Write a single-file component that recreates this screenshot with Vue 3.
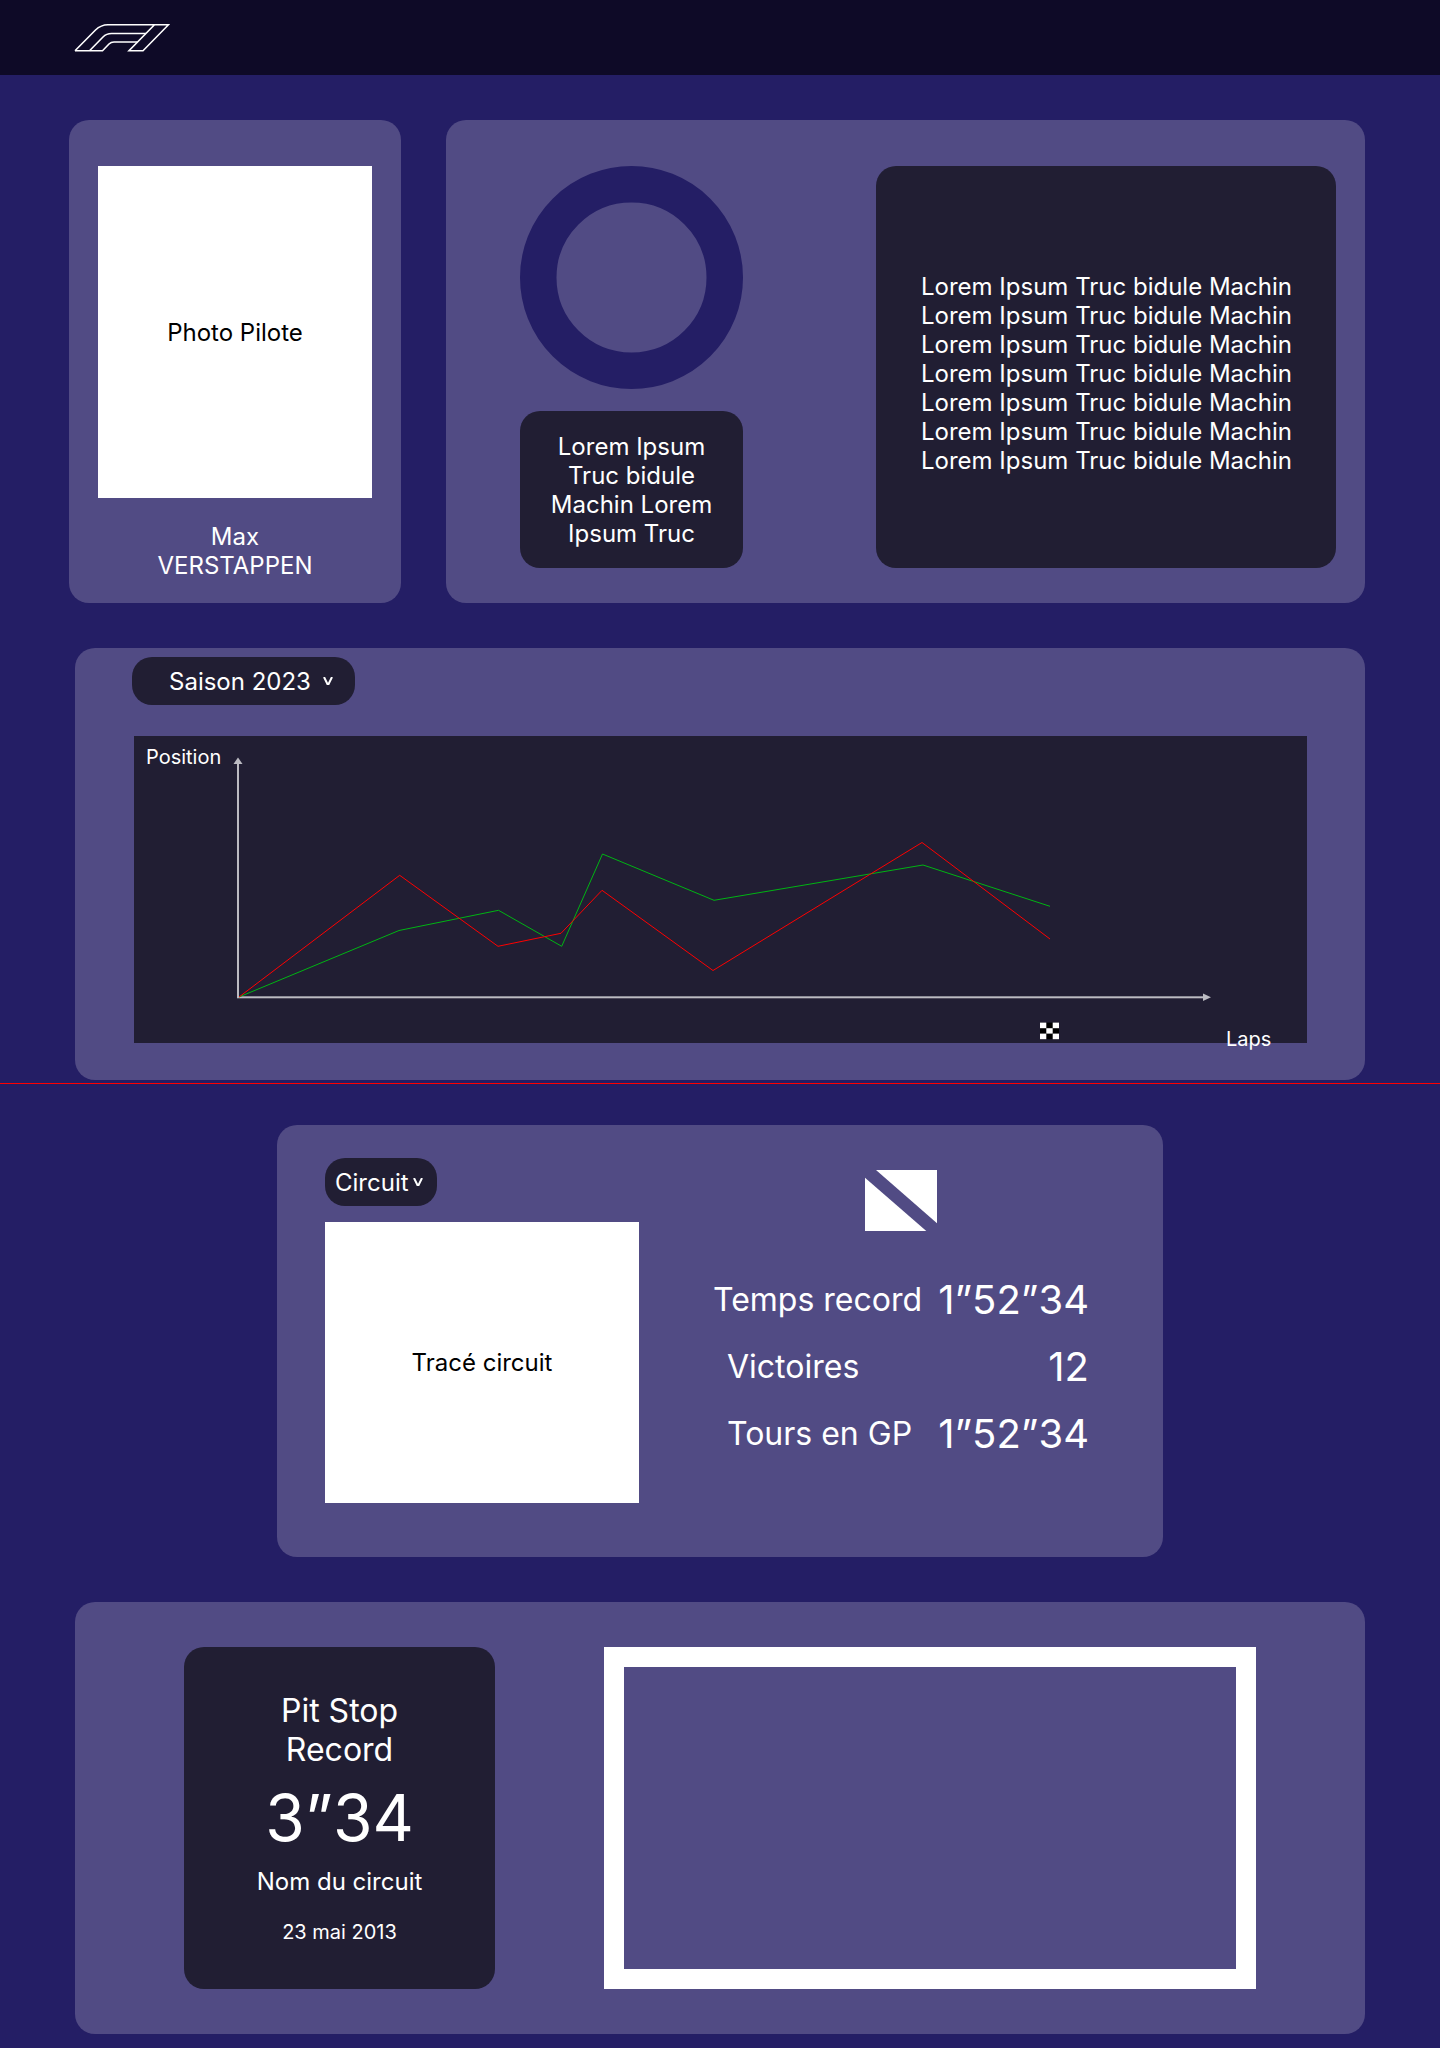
<script setup>
import { ref } from 'vue'

const season = ref('Saison 2023')
const circuit = ref('Circuit')
const loremLines = Array.from({ length: 7 }, () => 'Lorem Ipsum Truc bidule Machin')
const stats = [
  { label: 'Temps record', value: '1”52”34' },
  { label: 'Victoires', value: '12' },
  { label: 'Tours en GP', value: '1”52”34' },
]
</script>

<template>
  <div class="page">
    <header class="topbar">
      <a class="logo" href="#" aria-label="Accueil">
        <svg width="97" height="29" viewBox="0 0 97 29" fill="none" stroke="#fff" stroke-width="1.6">
          <path d="M2 27.7 L22.5 7 Q28 1.7 35 1.7 H95.5 L70 27.7 H56 L81.5 1.7" />
          <path d="M2 27.7 H29.5 L36 21 Q38 19 41 19 H64.5" />
          <path d="M16.5 27.7 L30 14 Q33.5 10.5 38.5 10.5 H73" />
        </svg>
      </a>
    </header>

    <main>
      <div class="row">
        <section class="card driver">
          <div class="placeholder photo">Photo Pilote</div>
          <p class="name">Max<br />VERSTAPPEN</p>
        </section>

        <section class="card overview">
          <div class="summary">
            <svg class="ring" viewBox="0 0 223 223" aria-hidden="true">
              <circle cx="111.5" cy="111.5" r="93.25" fill="none" stroke="#241e65" stroke-width="36.5" />
            </svg>
            <p class="panel blurb">Lorem Ipsum Truc bidule Machin Lorem Ipsum Truc</p>
          </div>
          <div class="panel details">
            <p v-for="(line, i) in loremLines" :key="i">{{ line }}</p>
          </div>
        </section>
      </div>

      <section class="card season">
        <div class="picker season-picker">
          <select v-model="season" aria-label="Saison">
            <option>Saison 2023</option>
          </select>
          <svg class="caret" viewBox="0 0 10 8" aria-hidden="true"><path d="M1 0 L4.4 7 H5.6 L9 0" /></svg>
        </div>
        <svg class="chart" viewBox="0 0 1173 307" role="img" aria-label="Position par tour">
          <rect width="1173" height="307" fill="#211e33" />
          <g fill="#bcbbc2">
            <rect x="103" y="27" width="2" height="235" />
            <path d="M104 21.5 L108.5 28 H99.5 Z" />
            <rect x="103" y="260.3" width="967" height="2" />
            <path d="M1077 261.3 L1069 265 V257.5 Z" />
          </g>
          <polyline class="line green" points="105,261 265,194.5 364.5,174.3 427.7,210.3 468.5,118 580,164.3 789,129 916,170.3" />
          <polyline class="line red" points="105,261 265.7,139.3 364,210.3 427,197.3 468,154.3 579,234.5 788,106.5 916,203" />
          <rect x="906" y="286.6" width="19" height="16.6" fill="#000" />
          <g fill="#fff">
            <rect x="906" y="286.6" width="6.3" height="5.6" />
            <rect x="918.7" y="286.6" width="6.3" height="5.6" />
            <rect x="912.3" y="292.2" width="6.4" height="5.4" />
            <rect x="906" y="297.6" width="6.3" height="5.6" />
            <rect x="918.7" y="297.6" width="6.3" height="5.6" />
          </g>
          <text x="12" y="28">Position</text>
          <text x="1092" y="310">Laps</text>
        </svg>
      </section>

      <hr class="fold" />

      <section class="card circuit">
        <div class="track">
          <div class="picker circuit-picker">
            <select v-model="circuit" aria-label="Circuit">
              <option>Circuit</option>
            </select>
            <svg class="caret" viewBox="0 0 10 8" aria-hidden="true"><path d="M1 0 L4.4 7 H5.6 L9 0" /></svg>
          </div>
          <div class="placeholder map">Tracé circuit</div>
        </div>
        <div class="records">
          <svg class="flag" width="72" height="61" viewBox="0 0 72 61" fill="#fff" aria-hidden="true">
            <path d="M11 0 H72 V53.3 Z" />
            <path d="M0 7.7 L61.3 61 H0 Z" />
          </svg>
          <dl>
            <div v-for="s in stats" :key="s.label" class="stat">
              <dt>{{ s.label }}</dt>
              <dd>{{ s.value }}</dd>
            </div>
          </dl>
        </div>
      </section>

      <section class="card pitstop">
        <div class="panel record">
          <h2>Pit Stop<br />Record</h2>
          <p class="time">3”34</p>
          <p>Nom du circuit</p>
          <p class="date">23 mai 2013</p>
        </div>
        <div class="frame"></div>
      </section>
    </main>
  </div>
</template>

<style>
body {
  margin: 0;
  background: #241e65;
}
</style>

<style scoped>
.page {
  box-sizing: border-box;
  min-height: 100vh;
  background: #241e65;
  color: #fff;
  font-family: Inter, 'Liberation Sans', sans-serif;
  font-size: 24px;
  font-weight: 400;
  line-height: 29px;
}
p, h2, dl, dd {
  margin: 0;
}
.topbar {
  display: flex;
  align-items: center;
  height: 75px;
  padding: 0 73px;
  background: #0e0a27;
}
.logo svg {
  display: block;
}
main {
  display: flex;
  flex-direction: column;
  padding: 45px 75px 14px;
}
.card {
  box-sizing: border-box;
  background: #514b84;
  border-radius: 20px;
}
.panel {
  box-sizing: border-box;
  background: #211e33;
  border-radius: 20px;
}
.placeholder {
  display: flex;
  align-items: center;
  justify-content: center;
  background: #fff;
  color: #000;
}
.row {
  display: flex;
  gap: 45px;
  margin: 0 0 45px -6px;
}
.driver {
  flex: 0 0 332px;
  padding: 46px 29px 23px;
}
.photo {
  height: 332px;
}
.name {
  margin-top: 24px;
  text-align: center;
}
.overview {
  flex: 1;
  display: flex;
  justify-content: space-between;
  padding: 46px 29px 35px 74px;
}
.summary {
  display: flex;
  flex-direction: column;
  gap: 22px;
  width: 223px;
}
.ring {
  display: block;
  width: 100%;
}
.blurb {
  flex: 1;
  padding: 21px 28px 20px;
  text-align: center;
}
.details {
  display: flex;
  flex-direction: column;
  justify-content: center;
  width: 460px;
  padding: 12px 45px 0;
  white-space: nowrap;
}
.season {
  padding: 9px 58px 37px 57px;
}
.picker {
  position: relative;
  height: 48px;
}
.picker select {
  appearance: none;
  width: 100%;
  height: 100%;
  border: 0;
  border-radius: 20px;
  background: #211e33;
  color: inherit;
  font: inherit;
}
.caret {
  position: absolute;
  top: 20px;
  width: 10px;
  height: 8px;
  fill: none;
  stroke: #fff;
  stroke-width: 2;
  pointer-events: none;
}
.season-picker {
  width: 223px;
  margin-bottom: 31px;
}
.season-picker select {
  padding: 0 37px;
}
.season-picker .caret {
  right: 22px;
}
.chart {
  display: block;
  box-sizing: border-box;
  width: 100%;
  padding-left: 2px;
  overflow: visible;
}
.chart text {
  fill: #fff;
  font-size: 20px;
}
.line {
  fill: none;
  stroke-width: 1;
}
.green {
  stroke: #00b413;
}
.red {
  stroke: #ff0000;
}
.fold {
  height: 1px;
  margin: 3px -75px 41px;
  border: 0;
  background: #ff0000;
}
.circuit {
  align-self: center;
  display: flex;
  width: 886px;
  margin-bottom: 45px;
  padding: 33px 73px 54px 48px;
  gap: 73px;
}
.track {
  flex: 0 0 314px;
}
.circuit-picker {
  width: 112px;
  margin-bottom: 16px;
}
.circuit-picker select {
  padding: 0 10px;
}
.circuit-picker .caret {
  right: 14px;
}
.map {
  height: 281px;
}
.records {
  flex: 1;
  display: flex;
  flex-direction: column;
  align-items: center;
  gap: 45px;
  padding: 12px 1px 0;
}
dl {
  display: flex;
  flex-direction: column;
  gap: 19px;
  width: 100%;
}
.stat {
  display: flex;
  align-items: center;
  justify-content: space-between;
  padding-left: 14px;
  white-space: nowrap;
}
.stat:first-child {
  padding-left: 0;
}
dt {
  font-size: 32px;
  line-height: 38px;
}
dd {
  font-size: 40px;
  line-height: 48px;
}
.pitstop {
  display: flex;
  justify-content: space-evenly;
  padding: 45px 0;
}
.record {
  display: flex;
  flex-direction: column;
  gap: 10px;
  width: 311px;
  padding: 44px 20px 45px;
  text-align: center;
}
h2 {
  font-size: 32px;
  font-weight: 400;
  line-height: 39px;
}
.time {
  font-size: 64px;
  line-height: 78px;
}
.date {
  margin-top: 14px;
  font-size: 20px;
  line-height: 24px;
}
.frame {
  box-sizing: border-box;
  width: 652px;
  border: 20px solid #fff;
}
</style>
